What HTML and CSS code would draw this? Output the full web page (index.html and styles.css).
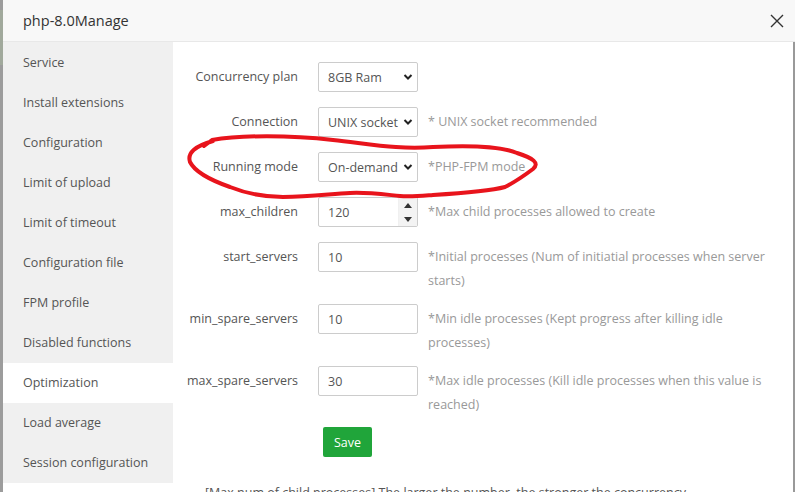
FILE: index.html
```html
<!DOCTYPE html>
<html>
<head>
<meta charset="utf-8">
<link rel="stylesheet" href="styles.css">
</head>
<body>
<div class="page">
  <div class="backdrop"><div class="bd-top"></div></div>
  <div class="modal">
    <div class="modal-header">
      <span class="modal-title">php-8.0Manage</span>
      <svg class="close" width="14" height="14" viewBox="0 0 14 14"><path d="M1 1L13 13M13 1L1 13" stroke="#333" stroke-width="1.4" fill="none"/></svg>
    </div>
    <div class="modal-body">
      <ul class="sidebar">
        <li>Service</li>
        <li>Install extensions</li>
        <li>Configuration</li>
        <li>Limit of upload</li>
        <li>Limit of timeout</li>
        <li>Configuration file</li>
        <li>FPM profile</li>
        <li>Disabled functions</li>
        <li class="active">Optimization</li>
        <li>Load average</li>
        <li>Session configuration</li>
      </ul>
      <div class="content">
        <div class="row">
          <label class="lbl">Concurrency plan</label>
          <div class="select"><span>8GB Ram</span><svg class="chev" width="10" height="8" viewBox="0 0 10 8"><path d="M1.5 2L5 5.5L8.5 2" stroke="#222" stroke-width="2" fill="none"/></svg></div>
        </div>
        <div class="row">
          <label class="lbl">Connection</label>
          <div class="select"><span>UNIX socket</span><svg class="chev" width="10" height="8" viewBox="0 0 10 8"><path d="M1.5 2L5 5.5L8.5 2" stroke="#222" stroke-width="2" fill="none"/></svg></div>
          <div class="help">* UNIX socket recommended</div>
        </div>
        <div class="row">
          <label class="lbl">Running mode</label>
          <div class="select"><span>On-demand</span><svg class="chev" width="10" height="8" viewBox="0 0 10 8"><path d="M1.5 2L5 5.5L8.5 2" stroke="#222" stroke-width="2" fill="none"/></svg></div>
          <div class="help">*PHP-FPM mode</div>
        </div>
        <div class="row">
          <label class="lbl">max_children</label>
          <div class="input number"><span>120</span>
            <div class="spin">
              <div class="spin-btn"><svg width="8" height="5" viewBox="0 0 8 5"><path d="M0 5L4 0L8 5Z" fill="#333"/></svg></div>
              <div class="spin-btn"><svg width="8" height="5" viewBox="0 0 8 5"><path d="M0 0L8 0L4 5Z" fill="#333"/></svg></div>
            </div>
          </div>
          <div class="help">*Max child processes allowed to create</div>
        </div>
        <div class="row">
          <label class="lbl">start_servers</label>
          <div class="input"><span>10</span></div>
          <div class="help wrap">*Initial processes (Num of initiatial processes when server starts)</div>
        </div>
        <div class="row">
          <label class="lbl">min_spare_servers</label>
          <div class="input"><span>10</span></div>
          <div class="help wrap">*Min idle processes (Kept progress after killing idle processes)</div>
        </div>
        <div class="row">
          <label class="lbl">max_spare_servers</label>
          <div class="input"><span>30</span></div>
          <div class="help wrap">*Max idle processes (Kill idle processes when this value is reached)</div>
        </div>
        <div class="actions"><button class="btn-save">Save</button></div>
        <ul class="notes">
          <li>[Max num of child processes] The larger the number, the stronger the concurrency</li>
        </ul>
      </div>
    </div>
  </div>
  <svg class="annotation" width="795" height="492" viewBox="0 0 795 492">
    <path d="M204 146 L212 140 C240 135 290 135 333 140 C370 144 400 150 433 147 C470 145 500 146 517 153 C533 158 540 163 533 169 C525 175 517 181 505 187 C490 191 465 193 433 195 C420 196 410 197 400 196 C380 194 365 192 350 193 C330 194 310 197 283 197 C260 197 245 193 230 187 C210 180 195 172 190 162 C187 153 195 146 213 141" stroke="#e8141c" stroke-width="4" fill="none" stroke-linecap="round" stroke-linejoin="round"/>
  </svg>
</div>
</body>
</html>
```

FILE: styles.css
```css
* { box-sizing: border-box; }
html, body { margin: 0; padding: 0; }
body {
  width: 795px;
  height: 492px;
  overflow: hidden;
  font-family: "Open Sans", "Noto Sans", sans-serif;
  color: #555;
  background: #999;
}
.page {
  position: relative;
  display: flex;
  width: 795px;
  height: 492px;
}
.backdrop {
  width: 3px;
  flex: none;
  background: #9c9c9c;
}
.bd-top {
  margin-top: 10px;
  height: 55px;
  background: #a1a99c;
}
.modal {
  flex: 1;
  display: flex;
  flex-direction: column;
  background: #fff;
  min-width: 0;
}
.modal-header {
  height: 42px;
  flex: none;
  background: #f8f8f8;
  border-bottom: 1px solid #e8e8e8;
  display: flex;
  align-items: center;
  justify-content: space-between;
  padding: 0 11px 0 20px;
}
.modal-title {
  font-size: 14.5px;
  color: #333;
}
.close { display: block; }
.modal-body {
  flex: 1;
  display: flex;
  min-height: 0;
}
.sidebar {
  list-style: none;
  margin: 0;
  padding: 1px 0 0;
  width: 170px;
  flex: none;
  background: #f0f0f0;
  align-self: flex-start;
}
.sidebar li {
  height: 40px;
  line-height: 40px;
  padding-left: 20px;
  font-size: 12.5px;
  color: #555;
}
.sidebar li.active { background: #fff; }
.content {
  flex: 1;
  padding-top: 20px;
  border-right: 2px solid #999;
  min-width: 0;
}
.row {
  display: flex;
  align-items: flex-start;
  margin-bottom: 15px;
}
.lbl {
  width: 125px;
  flex: none;
  text-align: right;
  margin-right: 20px;
  line-height: 30px;
  font-size: 12.5px;
  color: #555;
}
.select, .input {
  width: 100px;
  height: 30px;
  flex: none;
  border: 1px solid #ccc;
  border-radius: 2px;
  display: flex;
  align-items: center;
  padding-left: 9px;
  font-size: 12.5px;
  color: #555;
  background: #fff;
}
.select span { flex: 1; white-space: nowrap; overflow: hidden; }
.select .chev { margin-right: 4px; flex: none; }
.number { padding-right: 0; justify-content: space-between; }
.spin {
  width: 19px;
  height: 28px;
  display: flex;
  flex-direction: column;
  background: #f3f3f3;
  border-left: 1px solid #f0f0f0;
}
.spin-btn {
  flex: 1;
  display: flex;
  align-items: center;
  justify-content: center;
}
.help {
  margin-left: 10px;
  width: 341px;
  font-size: 12.5px;
  line-height: 22px;
  padding-top: 4px;
  color: #999;
}
.help.wrap {
  line-height: 24px;
  padding-top: 3px;
  margin-bottom: -4px;
}
.actions {
  padding-left: 150px;
  margin-top: -1px;
}
.btn-save {
  height: 30px;
  width: 49px;
  padding: 0;
  border: none;
  border-radius: 2px;
  background: #20a53a;
  color: #fff;
  font-family: "Open Sans", "Noto Sans", sans-serif;
  font-size: 12.5px;
}
.notes {
  margin: 27px 0 0;
  padding-left: 32px;
  list-style: none;
  font-size: 12.5px;
  color: #555;
  white-space: nowrap;
}
.annotation {
  position: absolute;
  left: 0;
  top: 0;
  pointer-events: none;
}
```
